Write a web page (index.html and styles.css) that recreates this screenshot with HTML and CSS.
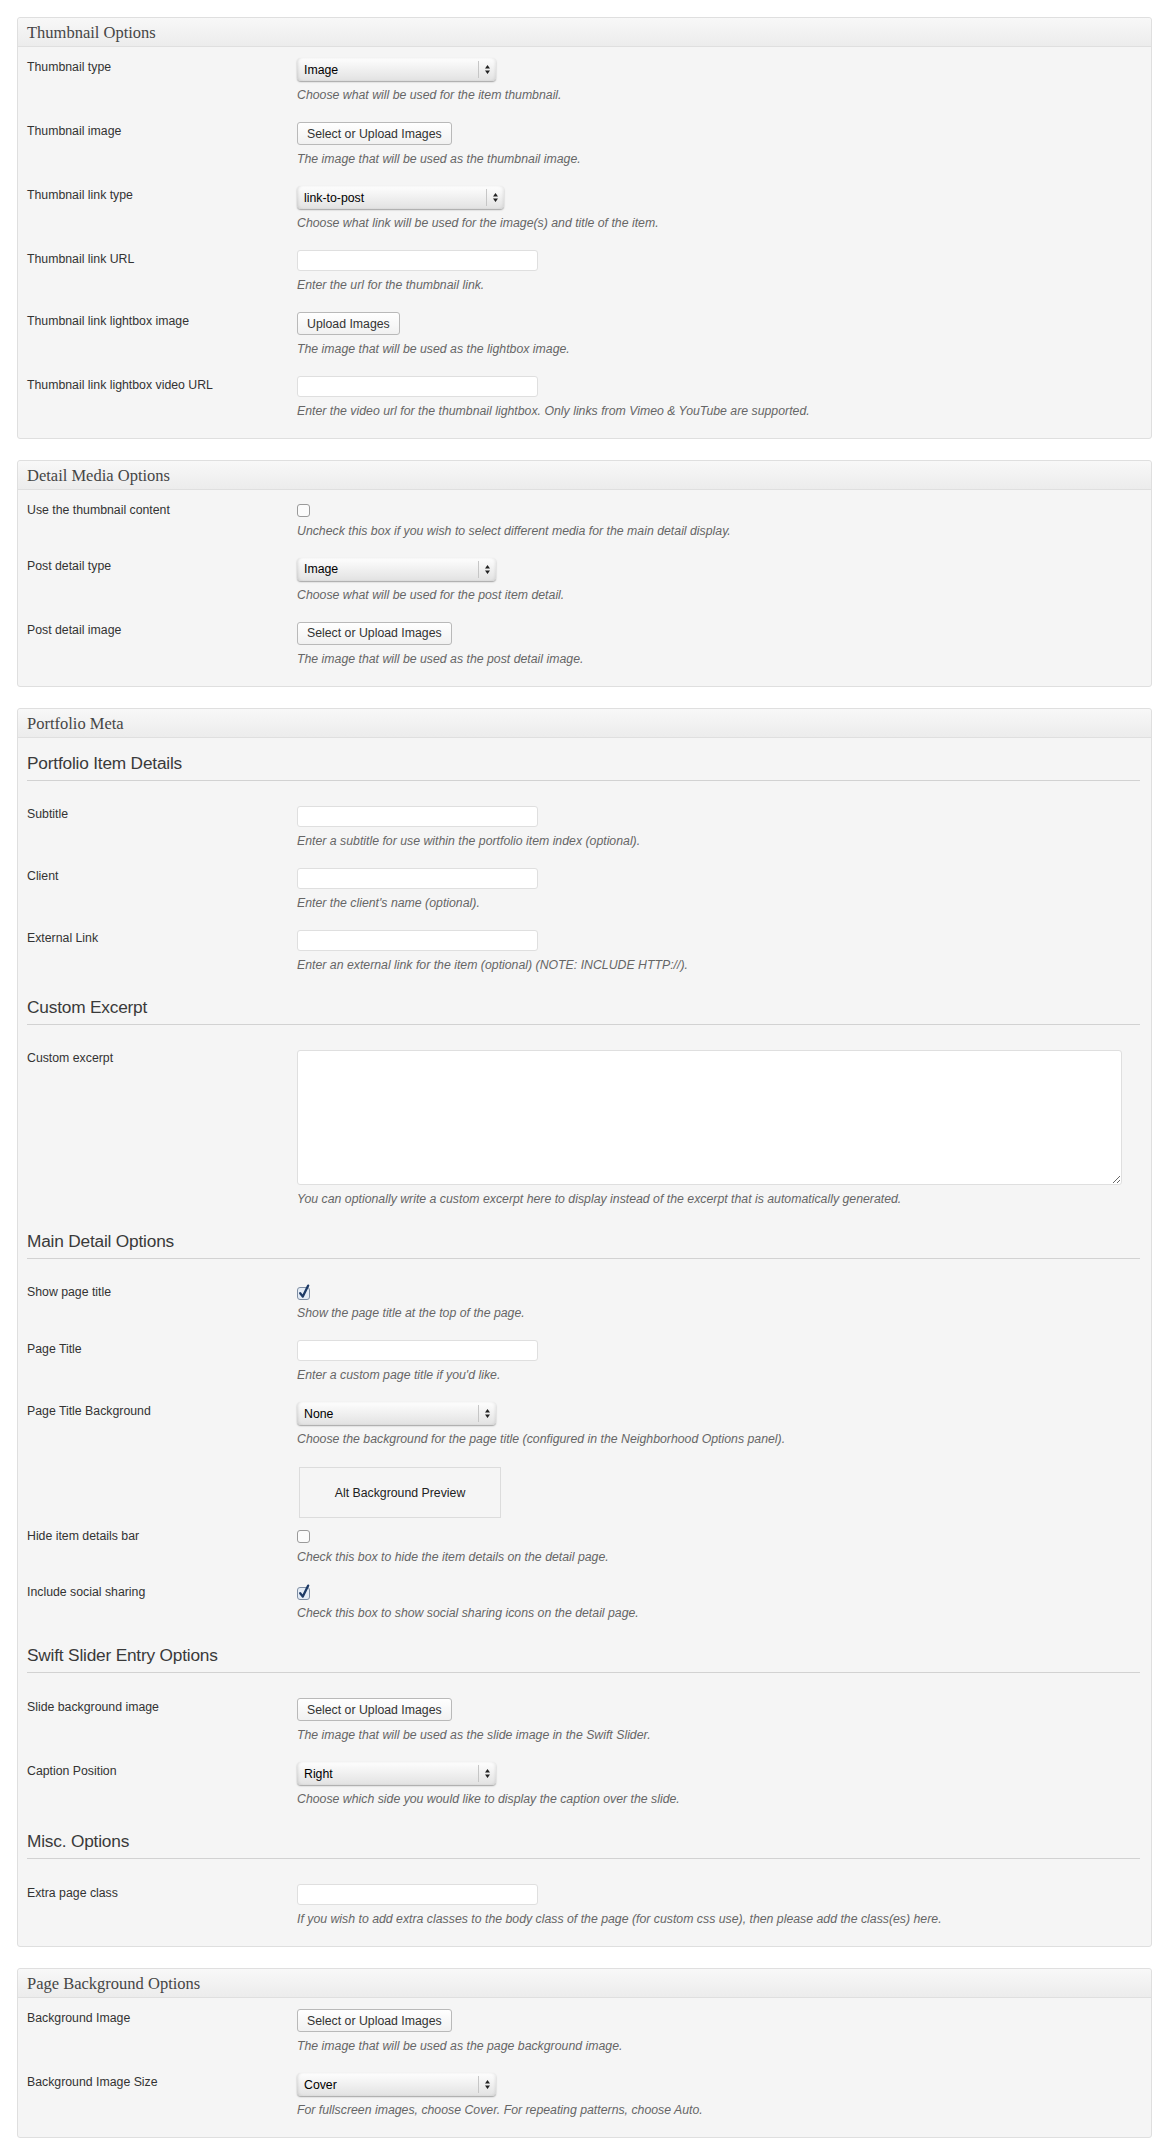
FILE: index.html
```html
<!DOCTYPE html>
<html lang="en">
<head>
  <meta charset="UTF-8" />
  <title>Portfolio item options</title>
  <link rel="stylesheet" href="styles.css">
</head>
<body>

  <div class="postbox">
    <h3 class="hndle">Thumbnail Options</h3>
    <div class="inside">
      <div class="field">
        <label>Thumbnail type</label>
        <div class="ctrl">
          <span class="select"><select><option>Image</option></select><svg class="arrows" viewBox="0 0 17 17"><path d="M6 7.5h5L8.5 4z M6 9.5h5L8.5 13z"/></svg></span>
          <p class="desc">Choose what will be used for the item thumbnail.</p>
        </div>
      </div>
      <div class="field">
        <label>Thumbnail image</label>
        <div class="ctrl">
          <button class="btn">Select or Upload Images</button>
          <p class="desc">The image that will be used as the thumbnail image.</p>
        </div>
      </div>
      <div class="field">
        <label>Thumbnail link type</label>
        <div class="ctrl">
          <span class="select wide"><select><option>link-to-post</option></select><svg class="arrows" viewBox="0 0 17 17"><path d="M6 7.5h5L8.5 4z M6 9.5h5L8.5 13z"/></svg></span>
          <p class="desc">Choose what link will be used for the image(s) and title of the item.</p>
        </div>
      </div>
      <div class="field">
        <label>Thumbnail link URL</label>
        <div class="ctrl">
          <input class="text" type="text" />
          <p class="desc">Enter the url for the thumbnail link.</p>
        </div>
      </div>
      <div class="field">
        <label>Thumbnail link lightbox image</label>
        <div class="ctrl">
          <button class="btn">Upload Images</button>
          <p class="desc">The image that will be used as the lightbox image.</p>
        </div>
      </div>
      <div class="field">
        <label>Thumbnail link lightbox video URL</label>
        <div class="ctrl">
          <input class="text" type="text" />
          <p class="desc">Enter the video url for the thumbnail lightbox. Only links from Vimeo &amp; YouTube are supported.</p>
        </div>
      </div>
    </div>
  </div>

  <div class="postbox">
    <h3 class="hndle">Detail Media Options</h3>
    <div class="inside">
      <div class="field">
        <label>Use the thumbnail content</label>
        <div class="ctrl">
          <svg class="check" viewBox="0 0 14 17"><rect x="0.5" y="3.5" width="12" height="12" rx="2.5"/></svg>
          <p class="desc">Uncheck this box if you wish to select different media for the main detail display.</p>
        </div>
      </div>
      <div class="field">
        <label>Post detail type</label>
        <div class="ctrl">
          <span class="select"><select><option>Image</option></select><svg class="arrows" viewBox="0 0 17 17"><path d="M6 7.5h5L8.5 4z M6 9.5h5L8.5 13z"/></svg></span>
          <p class="desc">Choose what will be used for the post item detail.</p>
        </div>
      </div>
      <div class="field">
        <label>Post detail image</label>
        <div class="ctrl">
          <button class="btn">Select or Upload Images</button>
          <p class="desc">The image that will be used as the post detail image.</p>
        </div>
      </div>
    </div>
  </div>

  <div class="postbox">
    <h3 class="hndle">Portfolio Meta</h3>
    <div class="inside">
      <h4 class="sub">Portfolio Item Details</h4>
      <div class="field">
        <label>Subtitle</label>
        <div class="ctrl">
          <input class="text" type="text" />
          <p class="desc">Enter a subtitle for use within the portfolio item index (optional).</p>
        </div>
      </div>
      <div class="field">
        <label>Client</label>
        <div class="ctrl">
          <input class="text" type="text" />
          <p class="desc">Enter the client's name (optional).</p>
        </div>
      </div>
      <div class="field">
        <label>External Link</label>
        <div class="ctrl">
          <input class="text" type="text" />
          <p class="desc">Enter an external link for the item (optional) (NOTE: INCLUDE HTTP://).</p>
        </div>
      </div>

      <h4 class="sub">Custom Excerpt</h4>
      <div class="field">
        <label>Custom excerpt</label>
        <div class="ctrl">
          <textarea class="area"></textarea>
          <p class="desc">You can optionally write a custom excerpt here to display instead of the excerpt that is automatically generated.</p>
        </div>
      </div>

      <h4 class="sub">Main Detail Options</h4>
      <div class="field">
        <label>Show page title</label>
        <div class="ctrl">
          <svg class="check on" viewBox="0 0 14 17"><rect x="0.5" y="3.5" width="12" height="12" rx="2.5"/><path class="tick" d="M3.2 9.2 L5.8 12.6 L11.2 1.6"/></svg>
          <p class="desc">Show the page title at the top of the page.</p>
        </div>
      </div>
      <div class="field">
        <label>Page Title</label>
        <div class="ctrl">
          <input class="text" type="text" />
          <p class="desc">Enter a custom page title if you'd like.</p>
        </div>
      </div>
      <div class="field tight">
        <label>Page Title Background</label>
        <div class="ctrl">
          <span class="select"><select><option>None</option></select><svg class="arrows" viewBox="0 0 17 17"><path d="M6 7.5h5L8.5 4z M6 9.5h5L8.5 13z"/></svg></span>
          <p class="desc">Choose the background for the page title (configured in the Neighborhood Options panel).</p>
          <div class="preview">Alt Background Preview</div>
        </div>
      </div>
      <div class="field">
        <label>Hide item details bar</label>
        <div class="ctrl">
          <svg class="check" viewBox="0 0 14 17"><rect x="0.5" y="3.5" width="12" height="12" rx="2.5"/></svg>
          <p class="desc">Check this box to hide the item details on the detail page.</p>
        </div>
      </div>
      <div class="field">
        <label>Include social sharing</label>
        <div class="ctrl">
          <svg class="check on" viewBox="0 0 14 17"><rect x="0.5" y="3.5" width="12" height="12" rx="2.5"/><path class="tick" d="M3.2 9.2 L5.8 12.6 L11.2 1.6"/></svg>
          <p class="desc">Check this box to show social sharing icons on the detail page.</p>
        </div>
      </div>

      <h4 class="sub">Swift Slider Entry Options</h4>
      <div class="field">
        <label>Slide background image</label>
        <div class="ctrl">
          <button class="btn">Select or Upload Images</button>
          <p class="desc">The image that will be used as the slide image in the Swift Slider.</p>
        </div>
      </div>
      <div class="field">
        <label>Caption Position</label>
        <div class="ctrl">
          <span class="select"><select><option>Right</option></select><svg class="arrows" viewBox="0 0 17 17"><path d="M6 7.5h5L8.5 4z M6 9.5h5L8.5 13z"/></svg></span>
          <p class="desc">Choose which side you would like to display the caption over the slide.</p>
        </div>
      </div>

      <h4 class="sub">Misc. Options</h4>
      <div class="field">
        <label>Extra page class</label>
        <div class="ctrl">
          <input class="text" type="text" />
          <p class="desc">If you wish to add extra classes to the body class of the page (for custom css use), then please add the class(es) here.</p>
        </div>
      </div>
    </div>
  </div>

  <div class="postbox">
    <h3 class="hndle">Page Background Options</h3>
    <div class="inside">
      <div class="field">
        <label>Background Image</label>
        <div class="ctrl">
          <button class="btn">Select or Upload Images</button>
          <p class="desc">The image that will be used as the page background image.</p>
        </div>
      </div>
      <div class="field">
        <label>Background Image Size</label>
        <div class="ctrl">
          <span class="select"><select><option>Cover</option></select><svg class="arrows" viewBox="0 0 17 17"><path d="M6 7.5h5L8.5 4z M6 9.5h5L8.5 13z"/></svg></span>
          <p class="desc">For fullscreen images, choose Cover. For repeating patterns, choose Auto.</p>
        </div>
      </div>
    </div>
  </div>

</body>
</html>
```

FILE: styles.css
```css
body { margin: 0; padding: 17px 18px 17px 17px; background: #fff; font-family: "Liberation Sans", Arial, sans-serif; font-size: 12.3px; color: #333; }

.postbox { background: #f5f5f5; border: 1px solid #dfdfdf; border-radius: 3px; margin-bottom: 21px; }
.postbox:last-child { margin-bottom: 0; }
.hndle { margin: 0; height: 28px; padding: 0 9px; font: normal 16.5px/29px "Liberation Serif", Georgia, serif; color: #464646; border-bottom: 1px solid #dfdfdf; background: linear-gradient(#f8f8f8, #ececec); border-radius: 3px 3px 0 0; }
.inside { padding: 11px 11px 0 9px; }

/* margins collapse with the 19px under the previous row */
.sub { margin: 24px 0 25px; padding-bottom: 7px; border-bottom: 1px solid #d2d2d2; font: normal 17.3px/20px "Liberation Sans", Arial, sans-serif; color: #3a3a3a; letter-spacing: -0.2px; }
.sub:first-child { margin-top: 4px; }

.field { display: grid; grid-template-columns: 270px 1fr; margin-bottom: 19px; }
.field.tight { margin-bottom: 9px; }
.field label { padding-top: 1.5px; line-height: 15px; color: #333; }
.desc { margin: 7px 0 0; font-style: italic; color: #666; line-height: 15px; }

.select { position: relative; display: block; width: 199px; height: 23px; }
.select.wide { width: 207px; }
.select select { -webkit-appearance: none; appearance: none; display: block; width: 100%; height: 23px; margin: 0; padding: 0 22px 0 7px; border: none; border-radius: 4px; background: linear-gradient(#fefefe, #f0f0f0 50%, #e2e2e2); box-shadow: inset 2px 0 3px -1px rgba(0,0,0,0.12), inset -2px 0 3px -1px rgba(0,0,0,0.08), 0 1px 1.5px rgba(0,0,0,0.35); font: 12.3px "Liberation Sans", Arial, sans-serif; color: #000; }
.select .arrows { position: absolute; right: 0; top: 3px; width: 17px; height: 17px; border-left: 1px solid #c6c6c6; fill: #222; pointer-events: none; }

.btn { display: block; height: 23px; padding: 0 9px; border: 1px solid #b9b9b9; border-radius: 3px; background: linear-gradient(#fff, #f1f1f1); font: 12.3px "Liberation Sans", Arial, sans-serif; color: #333; cursor: pointer; }

.text { display: block; box-sizing: border-box; width: 241px; height: 21px; margin: 0; border: 1px solid #dfdfdf; border-radius: 3px; background: #fff; }
.area { display: block; box-sizing: border-box; width: 825px; height: 135px; margin: 0; border: 1px solid #dfdfdf; border-radius: 3px; background: #fff; }

.check { display: block; width: 14px; height: 17px; overflow: visible; }
.check rect { fill: #fbfbfb; stroke: #9a9a9a; stroke-width: 1; }
.check.on rect { fill: #e4ecf6; stroke: #7f8ea3; }
.check .tick { fill: none; stroke: #1d3a66; stroke-width: 2.3; stroke-linecap: round; stroke-linejoin: round; }
.check + .desc { margin-top: 5.5px; }

.preview { box-sizing: border-box; width: 202px; height: 51px; margin: 20px 0 0 2px; border: 1px solid #dcdcdc; display: flex; align-items: center; justify-content: center; color: #222; }
```
